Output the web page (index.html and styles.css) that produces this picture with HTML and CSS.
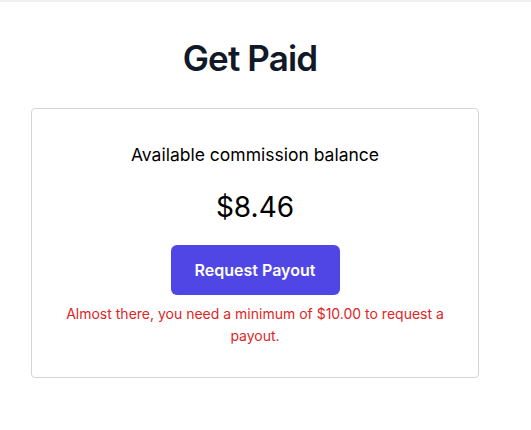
FILE: index.html
```html
<!DOCTYPE html>
<html lang="en">
<head>
<meta charset="utf-8">
<title>Get Paid</title>
<link rel="stylesheet" href="styles.css">
</head>
<body>
<div class="page">
  <h1 class="title">Get Paid</h1>
  <section class="card">
    <p class="label">Available commission balance</p>
    <p class="amount">$8.46</p>
    <button class="payout-btn" type="button">Request Payout</button>
    <p class="error">Almost there, you need a minimum of $10.00 to request a payout.</p>
  </section>
</div>
</body>
</html>
```
FILE: styles.css
```css
html, body {
  margin: 0;
  padding: 0;
  background: #ffffff;
}
body {
  font-family: Inter, "Noto Sans", sans-serif;
  color: #000;
  border-top: 2px solid #f0f0f2;
}
.page {
  width: 448px;
  margin-left: 31px;
  padding-top: 34px;
  display: flex;
  flex-direction: column;
  align-items: center;
}
.title {
  margin: 0;
  font-size: 35px;
  line-height: 44px;
  font-weight: 600;
  color: #111827;
  letter-spacing: -0.025em;
  transform: translateX(-5px);
}
.card {
  box-sizing: border-box;
  width: 448px;
  margin-top: 28px;
  border: 1px solid #d4d4dc;
  border-radius: 4px;
  padding: 34px 32px 30px;
  display: flex;
  flex-direction: column;
  align-items: center;
  text-align: center;
}
.label {
  margin: 0;
  font-size: 17.5px;
  line-height: 24px;
}
.amount {
  margin: 22px 0 0;
  font-size: 28px;
  line-height: 36px;
}
.payout-btn {
  margin-top: 20px;
  width: 169px;
  height: 50px;
  border: none;
  border-radius: 6px;
  background: #4f46e5;
  color: #fff;
  font-family: inherit;
  font-size: 16px;
  font-weight: 600;
}
.error {
  margin: 8px 0 0;
  font-size: 14px;
  line-height: 22px;
  color: #dc2626;
}
```
